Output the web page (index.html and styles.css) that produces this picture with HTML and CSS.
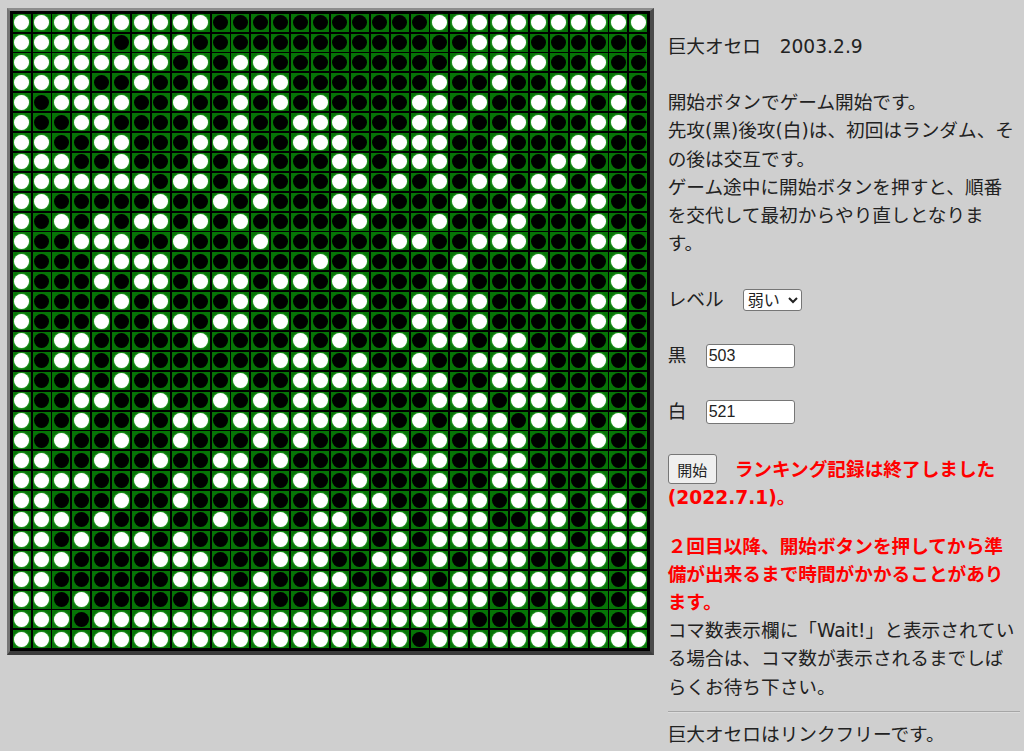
FILE: index.html
```html
<!DOCTYPE html>
<html lang="ja">
<head>
   <meta charset="UTF-8" />
   <meta name="viewport" content="width=device-width, initial-scale=1.0"/>
   <title>巨大オセロ</title>
   <link rel="stylesheet" href="styles.css">
</head>
<body>

   <div class="page">
      <div id="board" class="board"></div>

      <div class="side">
         <p>巨大オセロ　2003.2.9</p>

         <p>開始ボタンでゲーム開始です。<br>
         先攻(黒)後攻(白)は、初回はランダム、その後は交互です。<br>
         ゲーム途中に開始ボタンを押すと、順番を交代して最初からやり直しとなりま<br>す。</p>

         <p class="field">
            <label for="level" class="level-label">レベル</label>
            <select id="level">
               <option>弱い</option>
               <option>普通</option>
               <option>強い</option>
            </select>
         </p>

         <p class="field">
            <label for="black" class="count-label">黒</label>
            <input id="black" type="text" value="503">
         </p>

         <p class="field">
            <label for="white" class="count-label">白</label>
            <input id="white" type="text" value="521">
         </p>

         <p class="notice">
            <button id="startBtn">開始</button>
            <strong class="red start-note">ランキング記録は終了しました</strong><br>
            <strong class="red">(2022.7.1)。</strong>
         </p>

         <p class="wait"><strong class="red">２回目以降、開始ボタンを押してから準備が出来るまで時間がかかることがあります。</strong><br>
         コマ数表示欄に「Wait!」と表示されている場合は、コマ数が表示されるまでしばらくお待ち下さい。</p>

         <hr>

         <p>巨大オセロはリンクフリーです。</p>
      </div>
   </div>

   <script src="script.js"></script>

</body>
</html>
```

FILE: styles.css
```css
* {
   margin: 0;
   padding: 0;
   box-sizing: border-box;
}
html, body {
   height: 751px;
   overflow: hidden;
}
body {
   background-color: #cfcfcf;
   color: #222;
   font-family: "DejaVu Sans", "Noto Sans CJK JP", sans-serif;
   font-size: 18.67px;
   line-height: 28.2px;
}
.page {
   display: flex;
   align-items: flex-start;
   padding: 8px 0 0 7px;
}
.board {
   display: grid;
   grid-template-columns: repeat(32, 18px);
   grid-auto-rows: 18px;
   gap: 1.9px;
   flex: none;
   padding: 2.7px 3px 3px 2.7px;
   background-color: #000;
   border: solid;
   border-width: 3px 4px 4px 3px;
   border-color: #8c8c8c #4a4a4a #3c3c3c #757575;
}
.cell {
   display: flex;
   align-items: center;
   justify-content: center;
   background-color: #067406;
}
.stone {
   width: 15px;
   height: 15px;
   border-radius: 50%;
}
.stone.b {
   background-color: #000;
}
.stone.w {
   background-color: #fff;
   box-shadow: 0 0 2px #7be07b;
}
.side {
   width: 352px;
   margin-left: 13.4px;
   padding-top: 25px;
}
.side p {
   margin-bottom: 28px;
}
.field {
   display: flex;
   align-items: center;
   height: 28px;
}
.level-label {
   width: 75px;
}
.count-label {
   width: 38px;
}
select, input {
   font-family: "Liberation Sans", "Noto Sans CJK JP", sans-serif;
   font-size: 16px;
   color: #222;
   background-color: #fff;
   border: 1px solid #767676;
   border-radius: 3px;
}
select {
   width: 59px;
   height: 22px;
}
input {
   width: 89px;
   height: 24px;
   padding: 0 2px;
}
#startBtn {
   width: 49px;
   height: 30px;
   font-family: "Liberation Sans", "Noto Sans CJK JP", sans-serif;
   font-size: 15px;
   color: #222;
   background-color: #efefef;
   border: 1px solid #767676;
   border-radius: 3px;
}
.red {
   color: #f00;
   font-weight: bold;
}
.start-note {
   margin-left: 12px;
}
.side .notice {
   margin-bottom: 20px;
}
.side .wait {
   margin-bottom: 9px;
}
hr {
   margin-bottom: 8px;
   border: none;
   border-top: 1px solid #a6a6a6;
   border-bottom: 1px solid #dcdcdc;
}
```

FILE: script.js
```js
// final position, one string per row: w = white, b = black
const rows = [
   "wwwwwwwwwwbbbbbbbbbbbwwwwwwwwwww",
   "wwwwwbwwwbbbbbbbbbbbbbbwwwbbbbbb",
   "wwwwwwwwbwbwwbbbbbbbbbwwwwwbbwbb",
   "wwwwbbwbbwbwwwbbbbbbbwbbwbbwwwwb",
   "wbwwwwbbwbbwbwbwbbbbwwbwbbwwwbwb",
   "wbbwwbbbbwbwbbwwwbbbwwwbbwwbbwwb",
   "wwbbwwbbbwwwbbwwwbbwwwbbwbbbwwbb",
   "wwwbbwbbbwbwwbbbwwbwwwbbwbbwwbbb",
   "wwwwwwwbwwbwwbbbwwbwbwbwwbwwbwbb",
   "wwbbbbbwbbwbwbbbwwwbbbwbbwwbwwbb",
   "wbwbwbwwbwbwbbbbbwbbbwbbwwbbbwbb",
   "wbbwwwbbwbbbwbbbbbbwwbbwwwbbbwwb",
   "wbbbwwwwbbbbbbbwbwbbbbwbbbwbbbwb",
   "wbbbwbwwbwwwbwwbwwbbbwwbbbbbbbwb",
   "wbbbbwbwbbbwwbbbbwbbwwwwbbwbbwwb",
   "wbbbwbbwwbwwbwbbbwbbwwbwbbbbbwwb",
   "wbwwbbbbbwbbbbwbwbbwbwwbwwbbwbwb",
   "wbwwbwwbbbbbbwwwbwbbwbbwwwwbbwbb",
   "wbbwbwbbbbbwbbwwwwwwwwbbwwwbbbbb",
   "wbbwwbbwbbwbwbwwbwbbbwwwbwwwbwbb",
   "wbbwbbwbwwbwwwwwwwwbwbwwwbwwwbwb",
   "wbwbbwbbwbbbwbwbbwbwbwbwwwbbbwbb",
   "wwbbwbbwbbwwbwbbbbbbwwbbwwbbbbbb",
   "wwwwbbwbwbwwwbwbbwbbbwbbwwwbbwbb",
   "wwbbbwbbwbbbwbbwbwwbbwwwbwwwbwwb",
   "wwwbwbbwbbwbbwbwwbbwbwwwbbwwbwww",
   "wwbwbwwbwbbbbwwwwwbwbwwwwwwwbwww",
   "wwwbbbbwwwbbbwwwbbwwbwbwwwbbwwbw",
   "wwbbbbbbwwwbwbbwwbbwwbwwwwwwwwbw",
   "wwbwbbbbbwwwwbbwbwwwwwwwbwbwwbbw",
   "wwwbwwwwwwwwwwwwwwwwwwwbbbwbbbbw",
   "wwwwwwwwwwwwwwwwwwwwbwwwwwwwwwww"
];

const board = document.getElementById("board");

rows.forEach(function (row) {
   for (const c of row) {
      const cell = document.createElement("div");
      cell.className = "cell";
      const stone = document.createElement("div");
      stone.className = "stone " + c;
      cell.appendChild(stone);
      board.appendChild(cell);
   }
});
```
